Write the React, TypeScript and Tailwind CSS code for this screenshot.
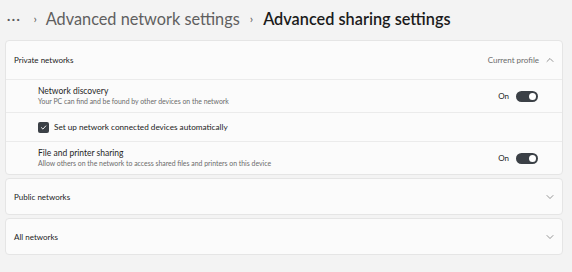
import { ChevronDown, ChevronUp } from 'lucide-react';

const font = { fontFamily: 'Lato, "Open Sans", sans-serif' };

function Toggle() {
  return (
    <div className="flex items-center gap-[7px]">
      <span className="text-[8px] text-[#1b1b1b]">On</span>
      <div className="flex h-[11px] w-[22px] items-center justify-end rounded-full bg-[#3b4046] pr-[2px]">
        <div className="h-[7px] w-[7px] rounded-full bg-white" />
      </div>
    </div>
  );
}

function SettingRow({ title, description }: { title: string; description: string }) {
  return (
    <div className="flex h-[33px] items-center justify-between border-t border-[#ebebeb] pl-[32px] pr-[24px]">
      <div className="flex flex-col leading-none">
        <span className="text-[8.5px] font-normal text-[#262626]">{title}</span>
        <span className="mt-[2.5px] text-[6.9px] text-[#6b6b6b]">{description}</span>
      </div>
      <Toggle />
    </div>
  );
}

function CollapsedCard({ title }: { title: string }) {
  return (
    <div className="flex h-[37px] items-center justify-between rounded-[4px] border border-[#e5e5e5] bg-[#fbfbfb] pl-[8px] pr-[6px]">
      <span className="text-[8px] text-[#1b1b1b]">{title}</span>
      <ChevronDown size={12} strokeWidth={1.3} className="text-[#5f5f5f]" />
    </div>
  );
}

export default function App() {
  return (
    <div className="h-[272px] w-[572px] overflow-hidden bg-[#f3f3f3]" style={font}>
      <div className="flex h-[40px] items-center pl-[7px] pb-[2px]">
        <span className="text-[12px] font-bold tracking-[1.5px] text-[#5a5a5a]">···</span>
        <span className="ml-[12px] text-[12px] text-[#5a5a5a]">›</span>
        <span className="ml-[9px] text-[16.3px] text-[#5f5f5f]">Advanced network settings</span>
        <span className="ml-[10px] text-[12px] text-[#5a5a5a]">›</span>
        <span className="ml-[10px] text-[16.3px] font-semibold text-[#1b1b1b]">Advanced sharing settings</span>
      </div>

      <div className="ml-[5px] flex w-[558px] flex-col gap-[3px]">
        <div className="rounded-[4px] border border-[#e5e5e5] bg-[#fbfbfb]">
          <div className="flex h-[38px] items-center justify-between pl-[8px] pr-[6px]">
            <span className="text-[8px] text-[#1b1b1b]">Private networks</span>
            <div className="flex items-center gap-[5px]">
              <span className="text-[8px] text-[#6b6b6b]">Current profile</span>
              <ChevronUp size={12} strokeWidth={1.3} className="text-[#5f5f5f]" />
            </div>
          </div>
          <SettingRow
            title="Network discovery"
            description="Your PC can find and be found by other devices on the network"
          />
          <div className="flex h-[29px] items-center gap-[5px] border-t border-[#ebebeb] pl-[32px]">
            <div className="flex h-[11px] w-[11px] items-center justify-center rounded-[2px] bg-[#3b4046]">
              <svg width="7" height="7" viewBox="0 0 10 10" fill="none">
                <path d="M2 5.2 L4.2 7.3 L8.2 2.8" stroke="white" strokeWidth="1.3" strokeLinecap="round" strokeLinejoin="round" />
              </svg>
            </div>
            <span className="text-[8.2px] text-[#1b1b1b]">Set up network connected devices automatically</span>
          </div>
          <SettingRow
            title="File and printer sharing"
            description="Allow others on the network to access shared files and printers on this device"
          />
        </div>
        <CollapsedCard title="Public networks" />
        <CollapsedCard title="All networks" />
      </div>
    </div>
  );
}
